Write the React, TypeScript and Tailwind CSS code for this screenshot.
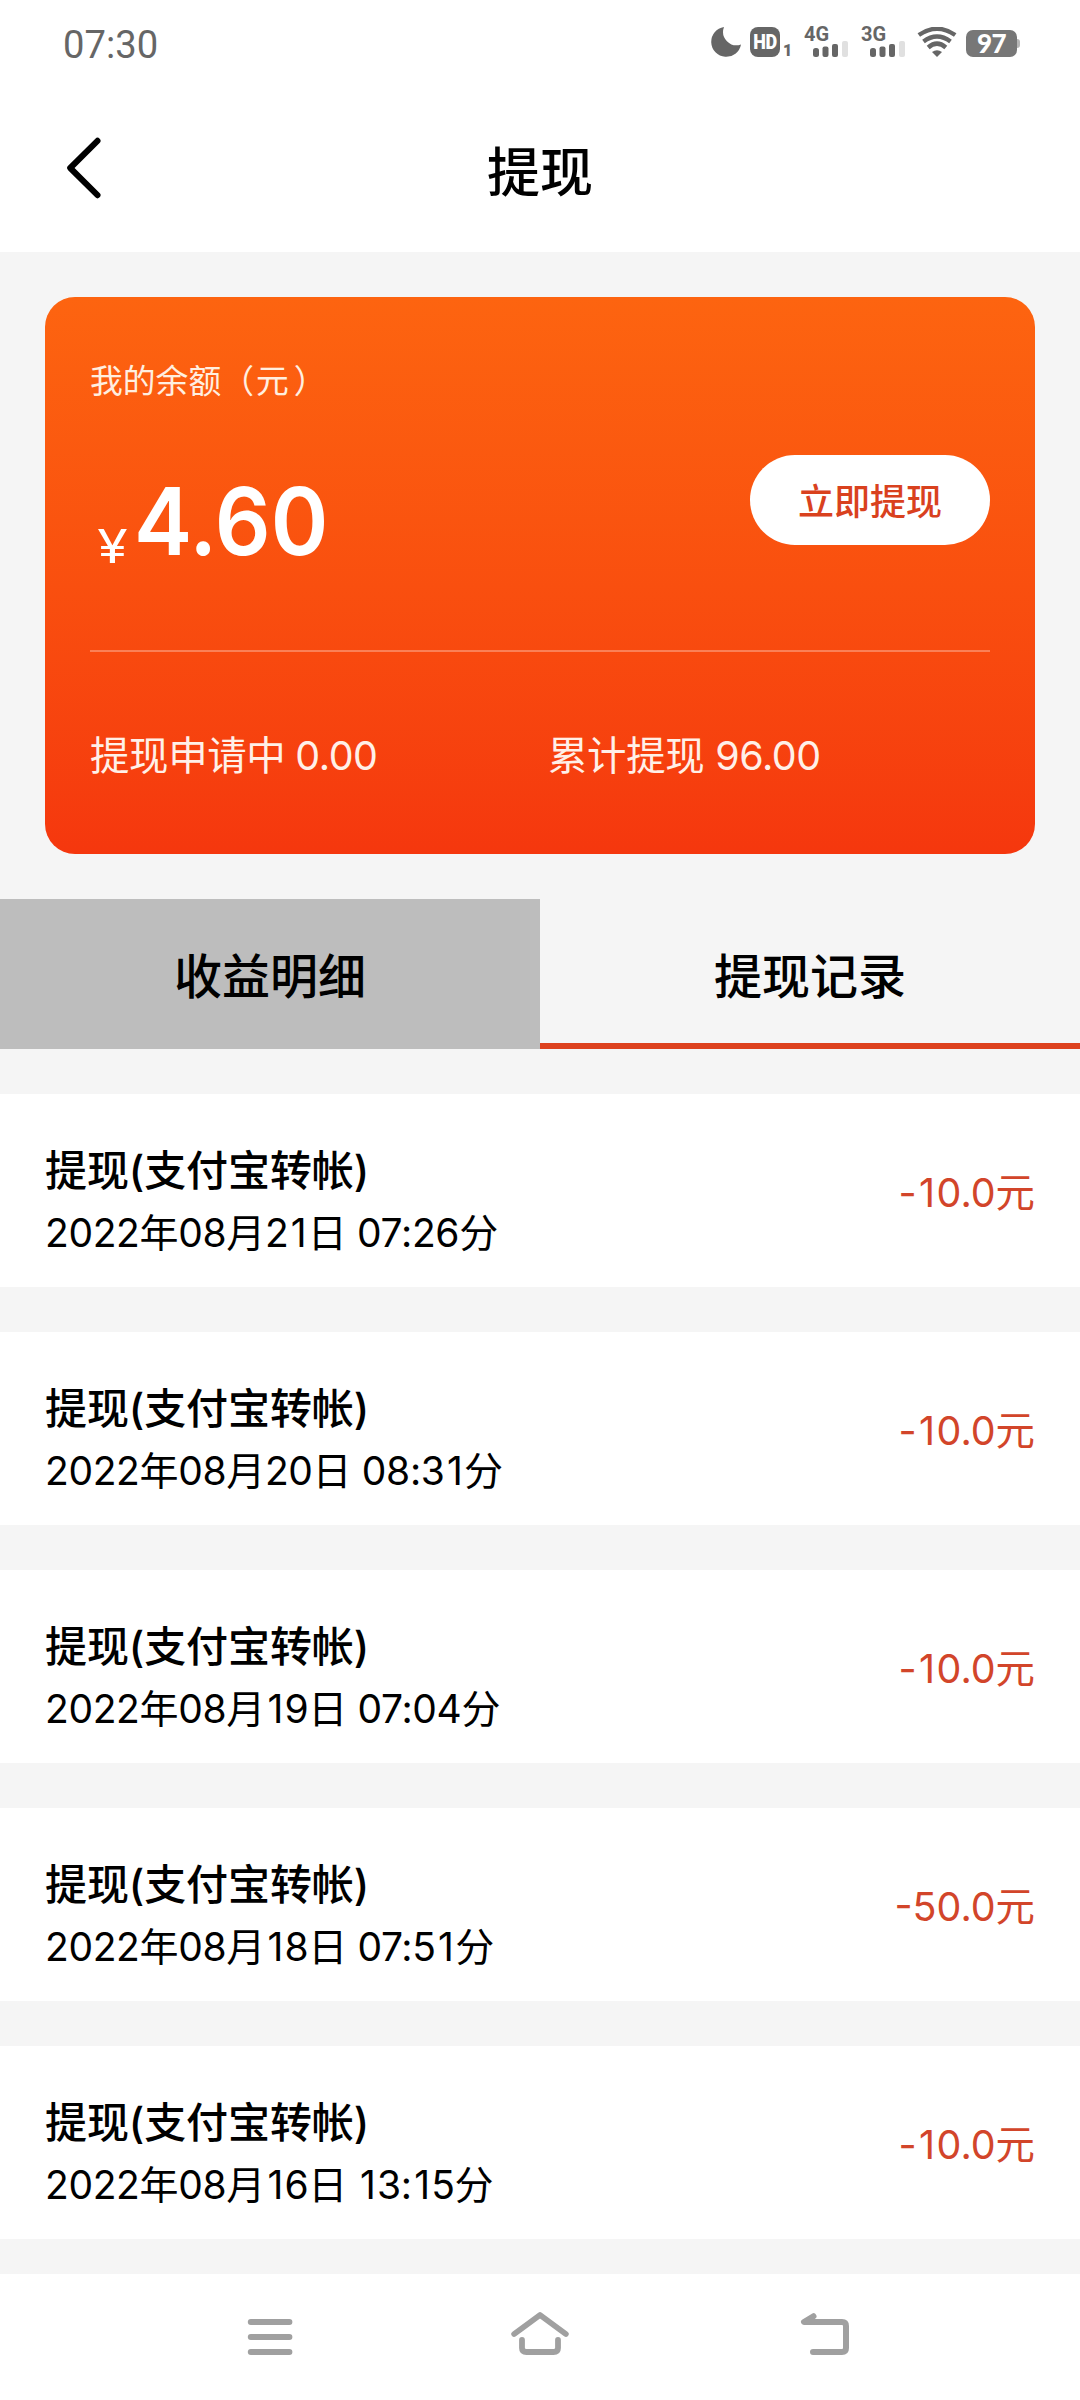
import { Fragment } from 'react';

const FONT = "font-['Inter','Noto_Sans_CJK_SC',sans-serif]";

const records = [
  { time: '2022年08月21日 07:26分', amount: '-10.0元' },
  { time: '2022年08月20日 08:31分', amount: '-10.0元' },
  { time: '2022年08月19日 07:04分', amount: '-10.0元' },
  { time: '2022年08月18日 07:51分', amount: '-50.0元' },
  { time: '2022年08月16日 13:15分', amount: '-10.0元' },
];

/** Text whose narrow "1" figures get a little extra room. */
function Figures({ text }: { text: string }) {
  return (
    <>
      {text.split('1').map((part, i) => (
        <Fragment key={i}>
          {i > 0 && <span className="pr-[1.5px] pl-[2.5px]">1</span>}
          {part}
        </Fragment>
      ))}
    </>
  );
}

function Signal({ label }: { label: string }) {
  return (
    <div className="relative h-[30px] w-[45px]">
      <span className="absolute top-0 left-0 font-['Roboto'] text-[20px] leading-[15px] font-bold text-[#666]">{label}</span>
      <svg className="absolute inset-0" width="45" height="30" viewBox="0 0 45 30" fill="#666">
        <rect x="9" y="21" width="6" height="9" rx="2.5" />
        <rect x="18.500" y="19.5" width="6" height="10.5" rx="2" />
        <rect x="28" y="17" width="6" height="13" rx="2" />
        <rect x="38" y="14" width="6" height="16" rx="2" fill="#e0e0e0" />
      </svg>
    </div>
  );
}

function StatusBar() {
  return (
    <div className="flex h-[84px] items-start justify-between pr-[60px] pl-[63px] text-[#666]">
      <span className="mt-[23px] font-['Roboto'] text-[38.200px] leading-[44px]">07:30</span>
      <div className="mt-[27px] flex h-[30px]">
        <svg width="30" height="30" viewBox="0 0 30 30" fill="#666">
          <path d="M13 0A15 15 0 1 0 30 17.5A13.5 13.5 0 0 1 13 0Z" />
        </svg>
        <div className="ml-[9px] flex h-[30px] w-[30px] items-center justify-center rounded-[8px] bg-[#666]">
          <span className="scale-x-90 font-['Roboto'] text-[20px] leading-none font-black tracking-[-0.5px] text-white">HD</span>
        </div>
        <span className="mt-[18px] ml-[3px] w-[21px] font-['Roboto'] text-[16px] leading-[12px] font-black">1</span>
        <Signal label="4G" />
        <div className="w-[12px]" />
        <Signal label="3G" />
        <svg className="ml-[11px]" width="40" height="30" viewBox="0 0 40 30" fill="none" stroke="#666" strokeWidth="4.400">
          <path d="M1.800 8Q20 -4.500 38.200 8" />
          <path d="M6.500 14.500Q20 4.500 33.500 14.500" />
          <path d="M11.200 20.500Q20 12.800 28.800 20.500" />
          <path d="M15 25Q20 21.500 25 25L20 30Z" fill="#666" stroke="none" />
        </svg>
        <div className="mt-[3px] ml-[9px] flex items-center">
          <div className="flex h-[27px] w-[51px] items-center justify-center rounded-[7px] bg-[#777] font-['Lato'] text-[26px] leading-[27px] font-black tracking-[-0.5px] text-white">97</div>
          <div className="h-[9px] w-[3px] rounded-r-[3px] bg-[#b5b5b5]" />
        </div>
      </div>
    </div>
  );
}

function Header() {
  return (
    <div className="grid h-[168px] grid-cols-3 items-center bg-white">
      <svg className="ml-[64px]" width="40" height="66" viewBox="0 0 40 66" fill="none" stroke="#000" strokeWidth="6" strokeLinecap="round" strokeLinejoin="round">
        <path d="M33.500 5.800L6.200 33L33.500 60.200" />
      </svg>
      <h1 className="pt-[9px] text-center text-[53px] leading-[60px] font-medium">提现</h1>
    </div>
  );
}

function BalanceCard() {
  return (
    <div className="mx-[45px] mt-[45px] h-[557px] rounded-[30px] bg-gradient-to-b from-[#fd6410] to-[#f5370e] px-[45px] text-white">
      <div className="pt-[61px] text-[32.800px] leading-[46px] text-[#ffefe0]">
        我的余额（<span className="pr-[5px] pl-[2px]">元</span>）
      </div>
      <div className="flex h-[246px] justify-between">
        <div className="flex items-baseline pt-[60px] pl-[6px]">
          <span className="relative top-[8px] w-[38px] origin-left scale-x-120 pl-[1px] text-[46px] leading-none">¥</span>
          <span className="origin-left scale-x-93 text-[94px] leading-[114px] font-semibold">4.60</span>
        </div>
        <button className="mt-[51px] h-[90px] w-[240px] rounded-full bg-white pt-[4px] text-[36px] font-medium text-[#d9411e]">立即提现</button>
      </div>
      <div className="h-[2px] bg-white/30" />
      <div className="mt-[78px] grid grid-cols-[458px_1fr] text-[39.400px] leading-[52px] tracking-[-0.300px] text-[#fff0e8]">
        <span>提现申请中 <span className="-ml-[1px] tracking-[-0.400px]">0.00</span></span>
        <span>累计提现 <span className="tracking-[-0.400px]">96.00</span></span>
      </div>
    </div>
  );
}

function Tabs() {
  return (
    <div className="mt-[45px] grid h-[150px] grid-cols-2 text-center text-[48px] leading-[140px] font-medium">
      <div className="bg-[#bdbdbd] pt-[8px]">收益明细</div>
      <div className="border-b-[6px] border-[#dd411e] pt-[4px]">
        <div className="relative top-[4px]">提现记录</div>
      </div>
    </div>
  );
}

function NavBar() {
  return (
    <div className="mt-[35px] grid h-[126px] grid-cols-3 bg-white pt-[36px]">
      <svg className="ml-[246px]" width="48" height="48" viewBox="0 0 48 48" fill="#a0a0a0">
        <rect x="1.800" y="9" width="44.600" height="6" rx="3" />
        <rect x="1.800" y="24" width="44.600" height="6" rx="3" />
        <rect x="1.800" y="39" width="44.600" height="6" rx="3" />
      </svg>
      <svg className="mx-auto" width="60" height="48" viewBox="0 0 60 48" fill="none" stroke="#a0a0a0" strokeWidth="5.800" strokeLinecap="round" strokeLinejoin="round">
        <path d="M4.200 24L30 5L55.800 24" />
        <path d="M12 30V38Q12 42 16.500 42H43.500Q48 42 48 38V30" />
      </svg>
      <svg className="ml-[80px]" width="52" height="48" viewBox="0 0 52 48" fill="none" stroke="#a0a0a0" strokeWidth="6" strokeLinecap="round" strokeLinejoin="round">
        <path d="M13.500 6.200L4 12H42Q46 12 46 16V38Q46 42 42 42H13" />
      </svg>
    </div>
  );
}

export default function App() {
  return (
    <div className={`h-[2400px] w-[1080px] overflow-hidden bg-[#f5f5f5] text-black ${FONT}`}>
      <div className="bg-white">
        <StatusBar />
        <Header />
      </div>
      <BalanceCard />
      <Tabs />
      <div className="mt-[45px] flex flex-col gap-[45px]">
        {records.map((r) => (
          <div key={r.time} className="flex h-[193px] items-center justify-between bg-white px-[45px]">
            <div className="pt-[22px]">
              <div className="text-[42px] leading-[62px] font-medium tracking-[-0.100px]">提现(支付宝转帐)</div>
              <div className="text-[39px] leading-[62px] tracking-[-0.350px]">
                <Figures text={r.time} />
              </div>
            </div>
            <div className="pt-[6px] text-[39.400px] text-[#d2452a]">
              <Figures text={r.amount} />
            </div>
          </div>
        ))}
      </div>
      <NavBar />
    </div>
  );
}
